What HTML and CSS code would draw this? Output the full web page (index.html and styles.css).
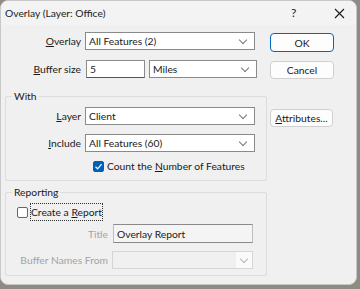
FILE: index.html
```html
<!DOCTYPE html>
<html>

<head>
    <title>Overlay</title>
    <link rel="stylesheet" href="styles.css">
</head>

<body>
    <div class="window">
        <div class="titlebar">
            <span class="title">Overlay (Layer: Office)</span>
            <span class="help">?</span>
            <span class="close">
                <svg width="11" height="11" viewBox="0 0 11 11">
                    <path d="M1 1 L10 10 M10 1 L1 10" stroke="#1a1a1a" stroke-width="1.1" fill="none" />
                </svg>
            </span>
        </div>

        <div class="content">
            <div class="leftcol">
                <div class="row first">
                    <label class="lbl"><u>O</u>verlay</label>
                    <div class="combo wide"><span>All Features (2)</span><i class="chev"></i></div>
                </div>
                <div class="row buffer">
                    <label class="lbl"><u>B</u>uffer size</label>
                    <div class="textbox small">5</div>
                    <div class="combo units"><span>Miles</span><i class="chev"></i></div>
                </div>

                <fieldset class="group with">
                    <legend>With</legend>
                    <div class="row">
                        <label class="lbl inner"><u>L</u>ayer</label>
                        <div class="combo wide"><span>Client</span><i class="chev"></i></div>
                    </div>
                    <div class="row include">
                        <label class="lbl inner"><u>I</u>nclude</label>
                        <div class="combo wide"><span>All Features (60)</span><i class="chev"></i></div>
                    </div>
                    <div class="checkrow count">
                        <span class="check on">
                            <svg width="9" height="9" viewBox="0 0 9 9">
                                <path d="M1.5 4.8 L3.6 6.8 L7.6 2.2" stroke="#fff" stroke-width="1.2" fill="none" />
                            </svg>
                        </span>
                        <span>Count the <u>N</u>umber of Features</span>
                    </div>
                </fieldset>

                <fieldset class="group reporting">
                    <legend>Reporting</legend>
                    <div class="checkrow report">
                        <span class="check"></span>
                        <span class="focus">Create a <u>R</u>eport</span>
                    </div>
                    <div class="row titlerow">
                        <label class="lbl dim">Title</label>
                        <div class="textbox disabled">Overlay Report</div>
                    </div>
                    <div class="row namesrow">
                        <label class="lbl dim">Buffer Names From</label>
                        <div class="combo disabled"><span></span><i class="chevbox"><i class="chev light"></i></i></div>
                    </div>
                </fieldset>
            </div>

            <div class="rightcol">
                <button class="btn ok">OK</button>
                <button class="btn cancel">Cancel</button>
                <button class="btn attrs"><u>A</u>ttributes...</button>
            </div>
        </div>
    </div>
</body>

</html>
```

FILE: styles.css
```css
body {
    margin: 0;
    padding: 0;
    background-color: #8f8a84;
    font-family: Lato, "Liberation Sans", sans-serif;
    font-size: 10.3px;
    line-height: 16px;
    color: #1a1a1a;
}

.window {
    width: 357px;
    height: 285px;
    background-color: #f0f0f0;
    border: 1px solid #c8c8c8;
    border-radius: 8px;
    box-sizing: border-box;
    overflow: hidden;
}

.titlebar {
    height: 24px;
    display: flex;
    align-items: center;
    background-color: #f3f3f3;
    padding-left: 4px;
}

.title {
    flex: 1;
}

.help {
    width: 14px;
    margin-right: 29px;
    font-size: 12px;
}

.close {
    width: 11px;
    margin-right: 11px;
    display: flex;
}

.content {
    display: flex;
    padding: 7px 0 0 4px;
}

.leftcol {
    width: 262px;
}

.rightcol {
    display: flex;
    flex-direction: column;
    margin-left: 3px;
}

.row {
    display: flex;
    align-items: center;
    height: 18px;
    white-space: nowrap;
}

.buffer {
    margin-top: 10px;
}

.include {
    margin-top: 9px;
}

.lbl {
    width: 80px;
    padding-right: 4px;
    box-sizing: border-box;
    text-align: right;
    white-space: nowrap;
}

.lbl.inner {
    width: 79px;
}

.lbl.dim {
    width: 107px;
    padding-right: 5px;
    color: #a3a3a3;
}

.combo,
.textbox {
    height: 18px;
    box-sizing: border-box;
    background-color: #fff;
    border: 1px solid #8a8a8a;
    display: flex;
    align-items: center;
    padding-left: 3px;
}

.combo span {
    flex: 1;
}

.wide {
    width: 170px;
}

.small {
    width: 59px;
    margin-left: 1px;
    border-bottom-color: #555;
}

.units {
    width: 108px;
    margin-left: 4px;
}

.chev {
    width: 5px;
    height: 5px;
    border-right: 1px solid #777;
    border-bottom: 1px solid #777;
    transform: rotate(45deg);
    margin: 0 8px 3px 0;
}

.chev.light {
    border-color: #b4b4b4;
    margin: 0 0 3px 0;
}

.group {
    margin: 0;
    padding: 5px 0 0 0;
    border: 1px solid #dcdcdc;
    border-radius: 2px;
    box-sizing: border-box;
}

.group legend {
    padding: 0 2px;
    margin-left: 6px;
    line-height: 12px;
}

.with {
    margin-top: 12px;
    height: 91px;
}

.reporting {
    margin-top: 5px;
    height: 90px;
    padding-top: 6px;
}

.checkrow {
    display: flex;
    align-items: center;
    gap: 3px;
    white-space: nowrap;
}

.count {
    margin-top: 6px;
    padding-left: 87px;
}

.report {
    padding-left: 11px;
}

.check {
    width: 11px;
    height: 11px;
    box-sizing: border-box;
    border: 1px solid #666;
    border-radius: 2px;
    background-color: #fff;
    display: flex;
    align-items: center;
    justify-content: center;
}

.check.on {
    border-color: #005fb8;
    background-color: #005fb8;
}

.focus {
    outline: 1px dotted #333;
    outline-offset: 0;
}

.titlerow {
    margin-top: 4px;
    height: 19px;
}

.namesrow {
    margin-top: 8px;
}

.textbox.disabled {
    width: 140px;
    height: 19px;
    background-color: #f4f4f4;
    border-color: #bdbdbd;
    border-top-color: #8a8a8a;
    border-bottom-color: #8a8a8a;
}

.combo.disabled {
    width: 141px;
    margin-left: -1px;
    background-color: #f0f0f0;
    border-color: #d5d5d5;
    padding-left: 0;
}

.chevbox {
    width: 16px;
    height: 16px;
    background-color: #fafafa;
    display: flex;
    align-items: center;
    justify-content: center;
}

.btn {
    width: 64px;
    height: 19px;
    box-sizing: border-box;
    font-family: inherit;
    font-size: 10.3px;
    color: #1a1a1a;
    background-color: #fdfdfd;
    border: 1px solid #d0d0d0;
    border-radius: 4px;
    padding: 0;
    line-height: 16px;
}

.ok {
    margin-top: 1px;
    border: 1px solid #0067c0;
    box-shadow: inset 0 0 0 1px #fff;
}

.cancel {
    margin-top: 9px;
    height: 18px;
}

.attrs {
    margin-top: 30px;
    width: 63px;
    height: 18px;
}
```
